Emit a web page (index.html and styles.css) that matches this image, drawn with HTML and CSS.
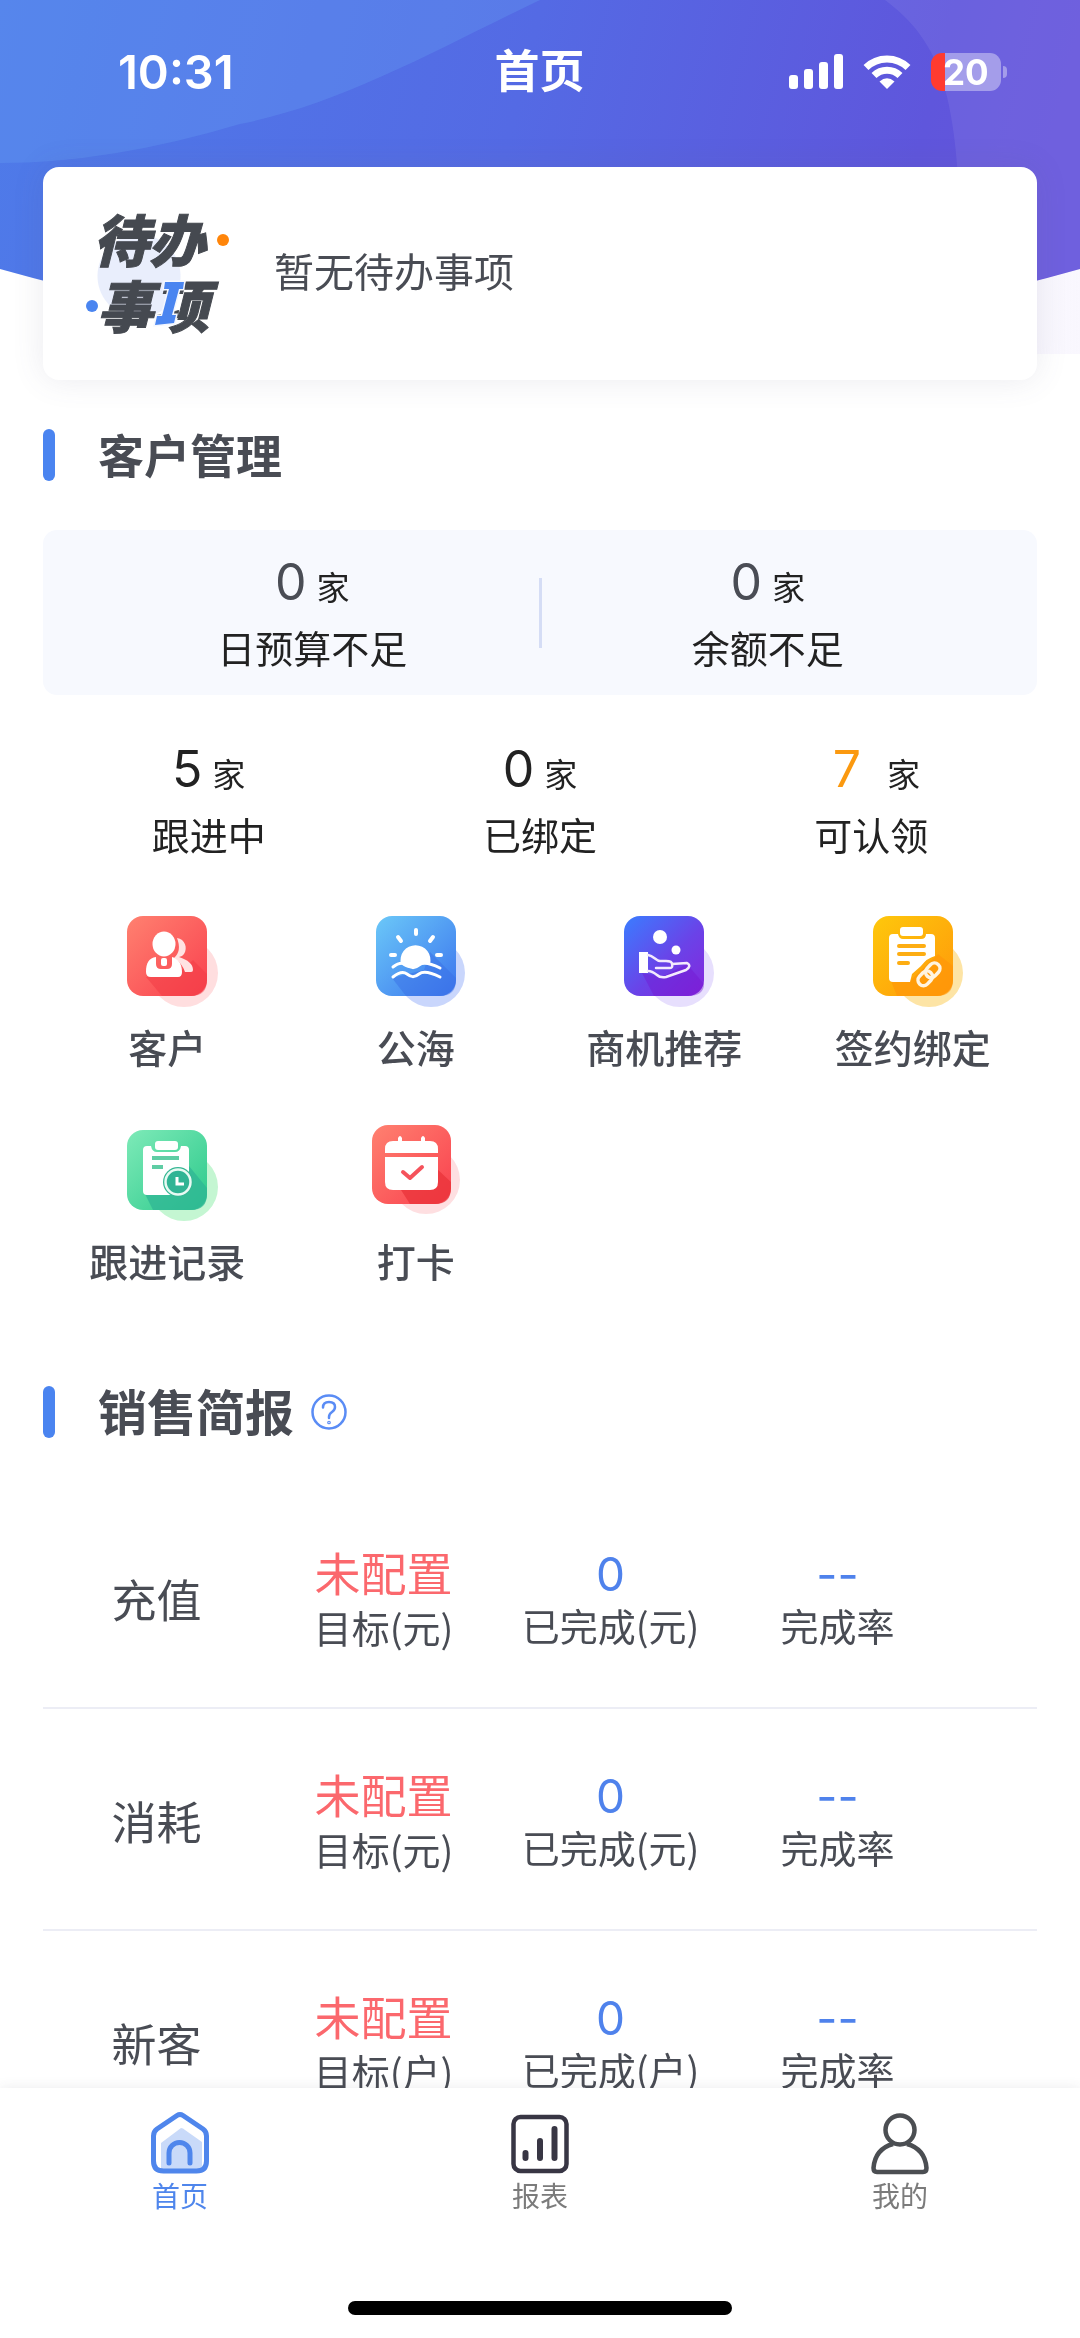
FILE: index.html
```html
<!DOCTYPE html>
<html lang="zh-CN">
<head>
<meta charset="utf-8">
<meta name="viewport" content="width=device-width, initial-scale=1">
<title>首页</title>
<link rel="stylesheet" href="styles.css">
</head>
<body>
<div class="app">
  <main class="content">
    <svg class="hero-art" viewBox="0 0 1080 354" preserveAspectRatio="none" aria-hidden="true">
      <defs>
        <linearGradient id="sky" x1="0" y1="0" x2="1" y2="0.08">
          <stop offset="0" stop-color="#4e7be9"/>
          <stop offset="0.5" stop-color="#546ae4"/>
          <stop offset="0.88" stop-color="#5f56dc"/>
          <stop offset="1" stop-color="#6554dc"/>
        </linearGradient>
        <linearGradient id="haze" x1="0" y1="0" x2="1" y2="0">
          <stop offset="0.3" stop-color="#f9f7fe" stop-opacity="0"/>
          <stop offset="1" stop-color="#f9f7fe"/>
        </linearGradient>
      </defs>
      <rect y="200" width="1080" height="154" fill="url(#haze)"/>
      <path d="M0 0H1080V269Q810 345 540 345T0 269Z" fill="url(#sky)"/>
      <path d="M0 0H540C440 48 340 105 240 124Q110 163 0 163Z" fill="#67a0f2" fill-opacity=".32"/>
      <path d="M885 0C945 45 962 100 961 300L1080 269V0Z" fill="#fff" fill-opacity=".07"/>
    </svg>

    <header class="status-bar">
      <time class="clock">10:31</time>
      <h1 class="page-title">首页</h1>
      <div class="indicators">
        <svg width="54" height="36" viewBox="0 0 54 36" fill="#fff" aria-label="信号">
          <rect y="21" width="9" height="14" rx="3"/><rect x="15" y="15" width="9" height="20" rx="3"/>
          <rect x="30" y="8" width="9" height="27" rx="3"/><rect x="45" y="0" width="9" height="35" rx="3"/>
        </svg>
        <svg width="48" height="36" viewBox="0 0 48 36" aria-label="无线网络">
          <g fill="none" stroke="#fff" stroke-width="7"><path d="M3 13.500A30 30 0 0 1 45 13.500"/><path d="M11 21.500A18.500 18.500 0 0 1 37 21.500"/></g>
          <path d="M24 35L16.500 27.500Q24 21 31.500 27.500Z" fill="#fff"/>
        </svg>
        <span class="battery"><span class="battery-level">20</span></span>
      </div>
    </header>

    <section class="todo-card">
      <div class="todo-logo">
        <p>待办</p>
        <p>事项</p>
        <svg viewBox="0 -3 150 138" aria-hidden="true">
          <path d="M86 74H105L104 81H100L93 107H97L95 115L76 117L78 108H83L90 81H85Z" fill="#4a85f0" stroke="#f4f7fe" stroke-width="3" paint-order="stroke"/>
          <circle cx="144" cy="32" r="6" fill="#ff850a"/>
          <circle cx="13" cy="98" r="6" fill="#4a85f0"/>
        </svg>
      </div>
      <p class="todo-text">暂无待办事项</p>
    </section>

    <section>
      <div class="section-head"><h2>客户管理</h2></div>
      <div class="alert-panel">
        <div class="stat"><p class="stat-value muted"><b>0</b><span>家</span></p><p class="stat-label">日预算不足</p></div>
        <span class="divider"></span>
        <div class="stat"><p class="stat-value muted"><b>0</b><span>家</span></p><p class="stat-label">余额不足</p></div>
      </div>
      <div class="stat-row">
        <div class="stat"><p class="stat-value"><b>5</b><span>家</span></p><p class="stat-label">跟进中</p></div>
        <div class="stat"><p class="stat-value"><b>0</b><span>家</span></p><p class="stat-label">已绑定</p></div>
        <div class="stat"><p class="stat-value claim"><b>7</b><span>家</span></p><p class="stat-label">可认领</p></div>
      </div>

      <nav class="shortcuts" aria-label="快捷入口">
        <a href="#customers">
          <svg class="app-icon" viewBox="0 0 104 104" aria-hidden="true">
            <defs><linearGradient id="red" x1="0" y1="0" x2="1" y2="1"><stop offset="0" stop-color="#ff8170"/><stop offset="1" stop-color="#f9404e"/></linearGradient></defs>
            <circle cx="69" cy="69" r="34" fill="#ffdedf"/>
            <rect x="12" y="12" width="80" height="80" rx="16" fill="url(#red)"/>
            <path d="M31 73L47 92H76Q92 92 92 76V70L78 56L60 73Z" fill="#f23c46" opacity=".55"/>
            <path d="M62 34C70 35 73 44 69 50Q67 53 64 53C73 56 78 60 78 66Q78 68 76 68H70Q67 59 59 54Q67 47 62 34Z" fill="#ffe3e3"/>
            <ellipse cx="49" cy="40" rx="11.500" ry="12.500" fill="#fff"/>
            <path d="M41 53C34 54 31 59 31 68Q31 73 36 73H63Q67 73 67 68C67 59 63 55 57 53V60Q57 65 52 65H46Q41 65 41 60Z" fill="#fff"/>
            <rect x="46" y="54" width="6" height="8" rx="2" fill="#fff"/>
          </svg>
          <span>客户</span>
        </a>
        <a href="#pool">
          <svg class="app-icon" viewBox="0 0 104 104" aria-hidden="true">
            <defs><linearGradient id="blue" x1="0" y1="0" x2="1" y2="1"><stop offset="0" stop-color="#6bc8f8"/><stop offset="1" stop-color="#3b74ee"/></linearGradient></defs>
            <circle cx="67" cy="69" r="34" fill="#c9d6fc"/>
            <rect x="12" y="12" width="80" height="80" rx="16" fill="url(#blue)"/>
            <path d="M28 74L42 92H76Q92 92 92 76V74L66 48L60 66Z" fill="#3a6fe6" opacity=".5"/>
            <path d="M37 60A15 15 0 1 1 66 60Q58 57 51 63Q44 66 37 60Z" fill="#fff"/>
            <g fill="none" stroke="#fff" stroke-width="4" stroke-linecap="round"><path d="M52 26V30M34 33L37 37M69 33L66 37M27 51H31M73 51H77"/><path stroke-width="3" d="M29 63C34 59 39 58 43 61S50 65 55 61S68 60 76 64"/><path stroke-width="3" d="M29 73C34 69 39 67 43 70S50 74 55 70S68 69 76 73"/></g>
          </svg>
          <span>公海</span>
        </a>
        <a href="#leads">
          <svg class="app-icon" viewBox="0 0 104 104" aria-hidden="true">
            <defs><linearGradient id="violet" x1="0" y1="0" x2="1" y2="1"><stop offset="0" stop-color="#3a7dff"/><stop offset=".55" stop-color="#6a43e8"/><stop offset="1" stop-color="#8526dc"/></linearGradient></defs>
            <circle cx="68" cy="69" r="34" fill="#e7dffd"/>
            <rect x="12" y="12" width="80" height="80" rx="16" fill="url(#violet)"/>
            <path d="M30 69L42 92H76Q92 92 92 80L75 60L50 73Z" fill="#7414cf" opacity=".4"/>
            <circle cx="48" cy="33" r="7" fill="#fff"/><circle cx="64" cy="46" r="4.500" fill="#fff"/>
            <rect x="27" y="48" width="9" height="21" fill="#fff"/>
            <path d="M36 51C42 52 44 57 48 57H54Q60 57 60 60L75 59Q80 62 74 66L54 73Q48 74 45 71Q40 67 36 67M44 64H58Q61 64 60 60" fill="none" stroke="#f3eafd" stroke-width="2.500" stroke-linejoin="round" stroke-linecap="round"/>
          </svg>
          <span>商机推荐</span>
        </a>
        <a href="#contracts">
          <svg class="app-icon" viewBox="0 0 104 104" aria-hidden="true">
            <defs><linearGradient id="amber" x1="0" y1="0" x2="1" y2="1"><stop offset="0" stop-color="#fec80c"/><stop offset="1" stop-color="#ff980a"/></linearGradient></defs>
            <circle cx="68" cy="69" r="34" fill="#fde4a5"/>
            <rect x="12" y="12" width="80" height="80" rx="16" fill="url(#amber)"/>
            <path d="M30 77L36 92H76Q92 92 92 76V62L77 50L50 76Z" fill="#ff9408" opacity=".6"/>
            <path d="M32 30H37Q38 35 42 35H60Q65 35 65 30H70Q74 30 74 34V52Q66 54 60 62L51 70L49 78H32Q28 78 28 74V34Q28 30 32 30Z" fill="#fff"/>
            <rect x="39" y="23" width="23" height="9" rx="3" fill="#fff"/>
            <g stroke="#fdad12" stroke-width="4" stroke-linecap="round"><path d="M38 42H63M38 50H63M38 59H47"/></g>
            <g fill="none" stroke="#fff4e0" stroke-width="3.500" transform="rotate(-47 68 71)"><rect x="55" y="65" width="16" height="11" rx="5.500"/><rect x="66" y="65" width="16" height="11" rx="5.500"/></g>
          </svg>
          <span>签约绑定</span>
        </a>
        <a href="#records">
          <svg class="app-icon" viewBox="0 0 104 104" aria-hidden="true">
            <defs><linearGradient id="green" x1="0" y1="0" x2="1" y2="1"><stop offset="0" stop-color="#7eeab8"/><stop offset="1" stop-color="#2bc98b"/></linearGradient></defs>
            <circle cx="69" cy="69" r="34" fill="#c4f6d2"/>
            <rect x="12" y="12" width="80" height="80" rx="16" fill="url(#green)"/>
            <path d="M30 76L38 92H76Q92 92 92 76V70L74 48L50 76Z" fill="#2fb594" opacity=".75"/>
            <path d="M32 28H36Q37 34 42 34H60Q65 34 66 28H70Q74 28 74 32V54L56 77H32Q28 77 28 73V32Q28 28 32 28Z" fill="#fff"/>
            <rect x="40" y="23" width="23" height="9" rx="3" fill="#fff"/>
            <path d="M37 40H64M37 49H48" stroke="#5fcda4" stroke-width="4"/>
            <circle cx="63" cy="64" r="15" fill="#37b794"/><circle cx="63" cy="64" r="12.500" fill="#30b494" stroke="#e8faf3" stroke-width="2.500"/>
            <path d="M62 59V66H69" fill="none" stroke="#fff" stroke-width="3"/>
          </svg>
          <span>跟进记录</span>
        </a>
        <a href="#checkin">
          <svg class="app-icon" viewBox="0 0 104 104" aria-hidden="true">
            <circle cx="62" cy="62" r="34" fill="#fedfe1"/>
            <rect x="8" y="7" width="79" height="79" rx="16" fill="url(#red)"/>
            <path d="M37 72L46 86H71Q87 86 87 70V64L72 50L60 72Z" fill="#ea3339" opacity=".75"/>
            <path d="M21 35V31Q21 23 29 23H34V20Q36 16 38 20V23H57V20Q59 16 61 20V23H66Q74 23 74 31V35ZM21 39H74V64Q74 72 66 72H29Q21 72 21 64Z" fill="#fff"/>
            <path d="M39 54L46 60L58 49" fill="none" stroke="#f5525b" stroke-width="4" stroke-linecap="round" stroke-linejoin="round"/>
          </svg>
          <span>打卡</span>
        </a>
      </nav>
    </section>

    <section>
      <div class="section-head report-head">
        <h2>销售简报</h2>
        <button class="help" type="button" aria-label="说明">
          <svg width="36" height="36" viewBox="0 0 36 36" fill="none" stroke="#5a8cf5" stroke-width="2.500">
            <circle cx="18" cy="18" r="16.500"/><path d="M12 13.500Q12 8 18 8T24 13Q24 16 21 18T18 23V24" stroke-linecap="round"/><circle cx="18" cy="28.500" r=".6"/>
          </svg>
        </button>
      </div>
      <table class="report">
        <tbody>
          <tr><th scope="row">充值</th>
            <td class="target"><strong>未配置</strong><span>目标(元)</span></td>
            <td><strong>0</strong><span>已完成(元)</span></td>
            <td><strong>--</strong><span>完成率</span></td></tr>
          <tr><th scope="row">消耗</th>
            <td class="target"><strong>未配置</strong><span>目标(元)</span></td>
            <td><strong>0</strong><span>已完成(元)</span></td>
            <td><strong>--</strong><span>完成率</span></td></tr>
          <tr><th scope="row">新客</th>
            <td class="target"><strong>未配置</strong><span>目标(户)</span></td>
            <td><strong>0</strong><span>已完成(户)</span></td>
            <td><strong>--</strong><span>完成率</span></td></tr>
        </tbody>
      </table>
    </section>
  </main>

  <footer class="dock">
    <nav class="tabs" aria-label="主导航">
      <a class="active" href="#home">
        <svg width="60" height="64" viewBox="0 0 60 64" aria-hidden="true">
          <path d="M11 60V32L31 17Q33 17 35 19L52 31V58H11Z" fill="#c9daf9"/>
          <path d="M27 4.500Q30 2.500 33 4.500L53 18Q56.500 20.500 56.500 25V50Q56.500 60 46.500 60H13.500Q3.500 60 3.500 50V25Q3.500 20.500 7 18Z" fill="none" stroke="#4f86ec" stroke-width="5"/>
          <path d="M19 52V42A10.500 10.500 0 0 1 40 42V52" fill="none" stroke="#4f86ec" stroke-width="5" stroke-linecap="round"/>
        </svg>
        <span>首页</span>
      </a>
      <a href="#reports">
        <svg width="60" height="64" viewBox="0 0 60 64" aria-hidden="true" fill="none" stroke="#383644">
          <rect x="3.500" y="6" width="53" height="54" rx="7" stroke-width="4.500"/>
          <path d="M15.500 42V47M30 30V47M44.500 18V47" stroke-width="6" stroke-linecap="round"/>
        </svg>
        <span>报表</span>
      </a>
      <a href="#mine">
        <svg width="60" height="64" viewBox="0 0 60 64" aria-hidden="true" fill="none" stroke="#4b4e52" stroke-width="4.500">
          <circle cx="30" cy="19" r="14.500"/>
          <path d="M23 33Q5 38 3.500 57Q3.500 61 7 61H53Q56.500 61 56.500 57Q55 38 37 33" stroke-linejoin="round"/>
        </svg>
        <span>我的</span>
      </a>
    </nav>
    <span class="home-indicator"></span>
  </footer>
</div>
</body>
</html>
```
FILE: styles.css
```css
* { box-sizing: border-box; }

body {
  margin: 0;
  background: #fff;
  color: #494c54;
  font-family: "Noto Sans CJK SC", "Noto Sans", sans-serif;
}

h1, h2, p { margin: 0; }

a { color: inherit; text-decoration: none; }

svg { display: block; flex: none; }

.app {
  display: flex;
  flex-direction: column;
  height: 100vh;
}

.content {
  position: relative;
  flex: 1;
  min-height: 0;
  overflow-y: auto;
  scrollbar-width: none;
  padding: 0 43px;
}

.hero-art {
  position: absolute;
  inset: 0 0 auto;
  z-index: -1;
  width: 100%;
  height: 354px;
}

/* Status bar */
.status-bar {
  display: grid;
  grid-template-columns: 1fr auto 1fr;
  align-items: center;
  height: 143px;
  padding: 0 36px 0 75px;
  color: #fff;
}

.clock { font: 600 47px/52px Inter, sans-serif; }

.page-title {
  padding: 0 40px 6px 0;
  font-size: 45px;
  line-height: 62px;
  font-weight: 700;
}

.indicators {
  display: flex;
  align-items: center;
  justify-content: flex-end;
  gap: 20px;
}

.battery {
  position: relative;
  width: 70px;
  height: 38px;
  border-radius: 11px;
  background: linear-gradient(90deg, #ff3b30 14px, rgba(255, 255, 255, .38) 14px);
}

.battery::after {
  content: "";
  position: absolute;
  left: 72px;
  top: 13px;
  width: 4px;
  height: 12px;
  border-radius: 0 4px 4px 0;
  background: rgba(255, 255, 255, .38);
}

.battery-level {
  display: block;
  padding-left: 12px;
  font: 700 35px/38px Inter, sans-serif;
}

/* To-do card */
.todo-card {
  display: flex;
  align-items: center;
  gap: 45px;
  height: 213px;
  margin-top: 24px;
  padding: 0 36px;
  border-radius: 16px;
  background: #fff;
  box-shadow: 0 0 32px rgba(90, 90, 120, .12);
}

.todo-logo {
  position: relative;
  width: 150px;
  height: 138px;
  background: radial-gradient(circle 42px at 60px 71px, #e9eefc 41px, transparent 42px);
}

.todo-logo p {
  padding-left: 14px;
  color: #454950;
  font-size: 56px;
  line-height: 66px;
  font-style: italic;
  font-weight: 900;
  -webkit-text-stroke: 1px #454950;
}

.todo-logo p + p { padding-left: 18px; }

.todo-logo svg {
  position: absolute;
  inset: 0;
  width: 150px;
  height: 138px;
}

.todo-text {
  padding-bottom: 8px;
  font-size: 40px;
  line-height: 56px;
}

/* Section headings */
.section-head {
  display: flex;
  align-items: center;
  height: 52px;
  margin: 49px 0;
}

.section-head::before {
  content: "";
  width: 12px;
  height: 52px;
  margin-right: 43px;
  border-radius: 6px;
  background: #4a84f0;
}

.section-head h2 {
  padding-bottom: 5px;
  font-size: 46px;
  line-height: 52px;
  font-weight: 700;
}

.report-head { margin: 98px 0 49px; }

.report-head h2 { font-size: 49px; }

.help {
  margin-left: 17px;
  padding: 0;
  border: 0;
  background: none;
}

/* Customer figures */
.alert-panel {
  display: grid;
  grid-template-columns: 1fr 3px 1fr;
  align-items: center;
  height: 165px;
  padding: 0 43px;
  border-radius: 14px;
  background: #f7f9fe;
}

.divider { height: 70px; background: #d5ddf5; }

.stat-row {
  display: grid;
  grid-template-columns: repeat(3, 1fr);
  margin: 42px 0;
}

.stat {
  display: flex;
  flex-direction: column;
  gap: 5px;
  color: #222;
  text-align: center;
}

.stat-value {
  display: flex;
  align-items: baseline;
  justify-content: center;
  gap: 10px;
  height: 64px;
  line-height: 64px;
}

.stat-value b { font: 400 50px/64px Inter, sans-serif; }

.stat-value span { font-size: 33px; }

.muted b { color: #4a4d55; }

.claim { gap: 26px; padding-left: 10px; }

.claim b { color: #fb990f; }

.stat-label { font-size: 38px; line-height: 56px; }

/* Shortcuts */
.shortcuts {
  display: grid;
  grid-template-columns: repeat(4, 1fr);
  row-gap: 44px;
}

.shortcuts a {
  display: flex;
  flex-direction: column;
  align-items: center;
  gap: 10px;
  font-size: 39px;
  line-height: 56px;
  font-weight: 500;
}

.app-icon { width: 104px; height: 104px; }

/* Sales report */
.report, .report tbody { display: block; }

.report tr {
  display: grid;
  grid-template-columns: repeat(4, 1fr);
  align-items: center;
  height: 222px;
  padding: 4px 86px 0 0;
  border-bottom: 2px solid #ecedf5;
}

.report th {
  padding: 0;
  font-size: 45px;
  line-height: 56px;
  font-weight: 400;
}

.report td {
  padding: 0;
  text-align: center;
  white-space: nowrap;
}

.report strong, .report span { display: block; }

.report strong {
  color: #4f82ec;
  font: 400 46px/52px Inter, sans-serif;
}

.report span { font-size: 38px; line-height: 50px; }

.report .target strong {
  color: #fb686d;
  font: 400 46px/56px "Noto Sans CJK SC", sans-serif;
}

.report .target span { line-height: 56px; }

/* Bottom dock */
.dock {
  position: relative;
  display: flex;
  flex-direction: column;
  align-items: center;
  justify-content: space-between;
  height: 250px;
  padding: 23px 0;
  background: #fff;
  box-shadow: 0 0 12px rgba(60, 60, 80, .1);
}

.tabs {
  display: grid;
  grid-template-columns: repeat(3, 1fr);
  width: 100%;
}

.tabs a {
  display: flex;
  flex-direction: column;
  align-items: center;
  color: #7b7b7b;
  font-size: 28px;
  line-height: 40px;
}

.tabs .active { color: #4f86ec; }

.home-indicator {
  width: 384px;
  height: 14px;
  border-radius: 7px;
  background: #000;
}
```
